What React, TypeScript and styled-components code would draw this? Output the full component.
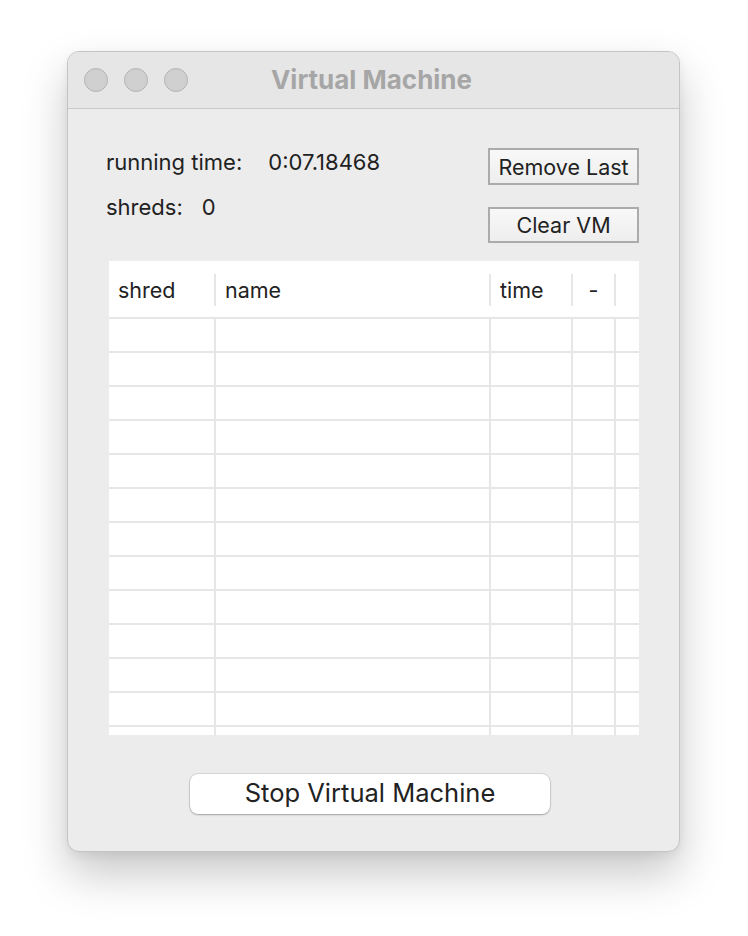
import React from "react";
import styled, { createGlobalStyle } from "styled-components";

const Global = createGlobalStyle`
  html, body { margin: 0; padding: 0; background: #ffffff; }
  body { font-family: Inter, "Noto Sans", sans-serif; color: #222; }
`;

const Page = styled.div`
  width: 748px;
  height: 936px;
  padding: 51px 0 0 67px;
  box-sizing: border-box;
`;

const Window = styled.div`
  width: 613px;
  height: 801px;
  box-sizing: border-box;
  border-radius: 12px;
  background: #ececec;
  border: 1px solid #c4c4c4;
  box-shadow: 0 22px 45px rgba(0, 0, 0, 0.22), 0 4px 10px rgba(0, 0, 0, 0.06);
  overflow: hidden;
  display: flex;
  flex-direction: column;
`;

const TitleBar = styled.div`
  height: 56px;
  flex: none;
  background: #e6e6e6;
  border-bottom: 1px solid #c9c9c9;
  display: flex;
  align-items: center;
  position: relative;
  padding-left: 16px;
  gap: 16px;
`;

const Light = styled.span`
  width: 22px;
  height: 22px;
  border-radius: 50%;
  background: #d0d0d0;
  border: 1px solid #b3b3b3;
`;

const Title = styled.div`
  position: absolute;
  left: 0;
  right: 0;
  top: 0;
  bottom: 0;
  display: flex;
  align-items: center;
  justify-content: center;
  font-weight: 700;
  font-size: 26px;
  color: #a6a6a6;
  padding-right: 4px;
  padding-bottom: 1px;
  pointer-events: none;
`;

const Content = styled.div`
  padding: 39px 40px 0 41px;
  display: flex;
  flex-direction: column;
`;

const TopRow = styled.div`
  display: flex;
  justify-content: space-between;
  height: 95px;
`;

const Info = styled.div`
  margin-left: -3px;
  display: flex;
  flex-direction: column;
  gap: 18px;
  padding-top: 1px;
`;

const InfoLine = styled.div`
  font-size: 22px;
  line-height: 27px;
  color: #222;
  white-space: pre;
`;

const Value = styled.span<{ $gap: number }>`
  margin-left: ${(p) => p.$gap}px;
`;

const Buttons = styled.div`
  display: flex;
  flex-direction: column;
  gap: 22px;
`;

const SquareButton = styled.button<{ $h: number }>`
  width: 151px;
  height: ${(p) => p.$h}px;
  box-sizing: border-box;
  border: 2px solid #ababab;
  border-radius: 0;
  background: linear-gradient(#f8f8f8, #eeeeee);
  font-family: Inter, "Noto Sans", sans-serif;
  font-size: 21.5px;
  color: #222;
  padding: 0;
  display: flex;
  align-items: center;
  justify-content: center;
`;

const Table = styled.div`
  margin-top: 18px;
  width: 530px;
  height: 474px;
  background: #ffffff;
  overflow: hidden;
  display: flex;
  flex-direction: column;
`;

const HeaderRow = styled.div`
  flex: none;
  display: flex;
  align-items: center;
  border-bottom: 2px solid #e6e6e6;
  box-sizing: border-box;
  height: 58px;
  padding-top: 1px;
`;

const HeaderCell = styled.div<{ $w: number; $last?: boolean; $center?: boolean }>`
  width: ${(p) => p.$w}px;
  flex: ${(p) => (p.$last ? "1" : "none")};
  box-sizing: border-box;
  height: 32px;
  display: flex;
  align-items: center;
  justify-content: ${(p) => (p.$center ? "center" : "flex-start")};
  padding-left: ${(p) => (p.$center ? 0 : 9)}px;
  border-right: ${(p) => (p.$last ? "none" : "2px solid #e6e6e6")};
  font-size: 21.5px;
  color: #222;
`;

const Row = styled.div`
  height: 34px;
  flex: none;
  display: flex;
  box-sizing: border-box;
  border-bottom: 2px solid #e6e6e6;
`;

const Cell = styled.div<{ $w: number; $last?: boolean }>`
  width: ${(p) => p.$w}px;
  flex: ${(p) => (p.$last ? "1" : "none")};
  box-sizing: border-box;
  border-right: ${(p) => (p.$last ? "none" : "2px solid #e6e6e6")};
`;

const StopButton = styled.button`
  margin-top: 39px;
  margin-left: 81px;
  width: 360px;
  height: 40px;
  border: none;
  border-radius: 8px;
  background: #ffffff;
  box-shadow: 0 0 0 0.5px rgba(0, 0, 0, 0.18), 0 1px 2px rgba(0, 0, 0, 0.25);
  font-family: Inter, "Noto Sans", sans-serif;
  font-size: 25.5px;
  color: #222;
  padding: 0 0 3px 0;
`;

const columns = [
  { label: "shred", w: 107 },
  { label: "name", w: 275 },
  { label: "time", w: 82 },
  { label: "-", w: 43, center: true },
  { label: "", w: 23, last: true },
];

export default function App() {
  const rows = Array.from({ length: 13 });
  return (
    <>
      <Global />
      <Page>
        <Window>
          <TitleBar>
            <Light />
            <Light />
            <Light />
            <Title>Virtual Machine</Title>
          </TitleBar>
          <Content>
            <TopRow>
              <Info>
                <InfoLine>
                  running time:<Value $gap={26}>0:07.18468</Value>
                </InfoLine>
                <InfoLine>
                  shreds:<Value $gap={19}>0</Value>
                </InfoLine>
              </Info>
              <Buttons>
                <SquareButton $h={37}>Remove Last</SquareButton>
                <SquareButton $h={36}>Clear VM</SquareButton>
              </Buttons>
            </TopRow>
            <Table>
              <HeaderRow>
                {columns.map((c, i) => (
                  <HeaderCell key={i} $w={c.w} $last={c.last} $center={c.center}>
                    {c.label}
                  </HeaderCell>
                ))}
              </HeaderRow>
              {rows.map((_, r) => (
                <Row key={r}>
                  {columns.map((c, i) => (
                    <Cell key={i} $w={c.w} $last={c.last} />
                  ))}
                </Row>
              ))}
            </Table>
            <StopButton>Stop Virtual Machine</StopButton>
          </Content>
        </Window>
      </Page>
    </>
  );
}
